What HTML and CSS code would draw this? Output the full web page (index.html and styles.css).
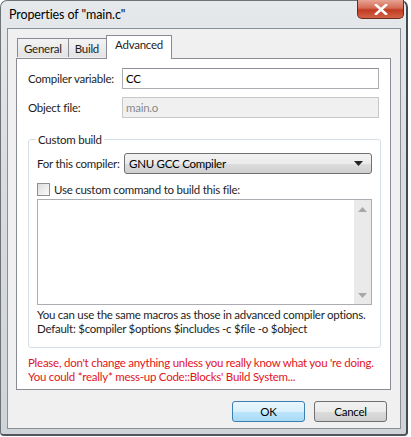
FILE: index.html
```html
<!DOCTYPE html>
<html>
<head>
<meta charset="utf-8">
<link rel="stylesheet" href="styles.css">
</head>
<body>
<div class="window">
  <div class="titlebar">
    <span class="title">Properties of "main.c"</span>
    <div class="close"><svg width="14" height="11" viewBox="0 0 14 11"><path d="M2 1 L12 10 M12 1 L2 10" stroke="#fff" stroke-width="2.6" stroke-linecap="square"/></svg></div>
  </div>
  <div class="client">
    <div class="tabs">
      <div class="tab">General</div>
      <div class="tab build">Build</div>
      <div class="tab active">Advanced</div>
    </div>
    <div class="panel">
      <div class="row">
        <span class="lbl">Compiler variable:</span>
        <div class="input">CC</div>
      </div>
      <div class="row row2">
        <span class="lbl">Object file:</span>
        <div class="input disabled">main.o</div>
      </div>
      <fieldset class="group">
        <legend>Custom build</legend>
        <div class="crow">
          <span class="clbl">For this compiler:</span>
          <div class="select"><span>GNU GCC Compiler</span><svg width="9" height="5" viewBox="0 0 9 5"><path d="M0 0 H9 L4.5 5 Z" fill="#222"/></svg></div>
        </div>
        <div class="check"><span class="box"></span><span>Use custom command to build this file:</span></div>
        <div class="textarea">
          <div class="vscroll">
            <svg width="9" height="5" viewBox="0 0 9 5"><path d="M0 5 H9 L4.5 0 Z" fill="#a8a8a8"/></svg>
            <svg width="9" height="5" viewBox="0 0 9 5"><path d="M0 0 H9 L4.5 5 Z" fill="#a8a8a8"/></svg>
          </div>
        </div>
        <p class="note">You can use the same macros as those in advanced compiler options.<br>Default: $compiler $options $includes -c $file -o $object</p>
      </fieldset>
      <p class="warn">Please, don't change anything unless you really know what you 're doing.<br>You could *really* mess-up Code::Blocks' Build System...</p>
    </div>
    <div class="buttons">
      <div class="btn ok">OK</div>
      <div class="btn">Cancel</div>
    </div>
  </div>
</div>
</body>
</html>
```
FILE: styles.css
```css
html, body {
  margin: 0;
  padding: 0;
  background: #fff;
}
body {
  font-family: Lato, "Noto Sans", sans-serif;
  font-size: 11.5px;
  letter-spacing: -0.25px;
  color: #1e1e1e;
  white-space: nowrap;
}
.window {
  width: 408px;
  height: 436px;
  box-sizing: border-box;
  border: 1px solid #6e7378;
  border-right: 2px solid #444a50;
  border-bottom: 2px solid #50565c;
  border-radius: 7px 7px 4px 4px;
  background: linear-gradient(to bottom, #e6e9ec 0%, #d9dde1 40%, #cfd4d9 100%);
  display: flex;
  flex-direction: column;
  padding: 0 5px 5px 6px;
}
.titlebar {
  height: 27px;
  display: flex;
  align-items: flex-start;
  position: relative;
}
.title {
  font-size: 12.5px;
  letter-spacing: -0.1px;
  color: #000;
  padding-left: 2px;
  padding-top: 6px;
}
.close {
  position: absolute;
  right: -3px;
  top: -1px;
  width: 47px;
  height: 19px;
  box-sizing: border-box;
  border: 1px solid #6b2a22;
  border-top: none;
  border-radius: 0 0 5px 5px;
  background: linear-gradient(to bottom, #e8a493 0%, #d46a55 45%, #c13a22 55%, #d26448 100%);
  display: flex;
  align-items: center;
  justify-content: center;
}
.client {
  flex: 1;
  border: 1px solid #8a9097;
  background: #f0f0f0;
  padding: 5px 13px 0 8px;
  display: flex;
  flex-direction: column;
}
.tabs {
  display: flex;
  align-items: flex-end;
  height: 24px;
  padding-left: 1px;
  position: relative;
  z-index: 1;
}
.tab {
  height: 19px;
  box-sizing: border-box;
  border: 1px solid #898c95;
  border-bottom: none;
  padding: 0 6px;
  line-height: 19px;
  background: linear-gradient(to bottom, #f3f3f3, #e3e3e3);
  margin-right: -1px;
  margin-bottom: 1px;
}
.tab.build {
  padding: 0 8px 0 6px;
}
.tab.active {
  height: 24px;
  line-height: 18px;
  background: #fff;
  padding: 0 8px;
  margin-bottom: -1px;
  margin-left: -1px;
}
.panel {
  width: 375px;
  height: 332px;
  box-sizing: border-box;
  border: 1px solid #898c95;
  background: #fff;
  padding: 9px 11px 0 11px;
}
.row {
  display: flex;
  align-items: center;
  height: 21px;
}
.row2 {
  margin-top: 8px;
}
.lbl {
  width: 94px;
  flex-shrink: 0;
}
.input {
  width: 259px;
  height: 21px;
  box-sizing: border-box;
  border: 1px solid #abadb3;
  border-top-color: #8d9096;
  padding: 0 3px;
  line-height: 19px;
  color: #000;
  background: #fff;
}
.input.disabled {
  background: #f0f0f0;
  color: #8a8a8a;
  border-color: #c8c8c8;
}
.group {
  margin: 15px 0 0 0;
  padding: 7px 8px 11px 8px;
  width: 353px;
  box-sizing: border-box;
  border: 1px solid #d5dfe5;
  border-radius: 3px;
}
.group legend {
  padding: 0 2px;
  margin-left: -1px;
}
.crow {
  display: flex;
  align-items: center;
  height: 21px;
}
.clbl {
  width: 87px;
  flex-shrink: 0;
}
.select {
  width: 248px;
  height: 21px;
  box-sizing: border-box;
  border: 1px solid #707070;
  border-radius: 3px;
  background: linear-gradient(to bottom, #f2f2f2 0%, #ebebeb 50%, #dddddd 51%, #cfcfcf 100%);
  display: flex;
  align-items: center;
  justify-content: space-between;
  padding: 0 8px 0 4px;
  color: #000;
}
.check {
  display: flex;
  align-items: center;
  margin-top: 8px;
  height: 14px;
}
.box {
  width: 13px;
  height: 13px;
  box-sizing: border-box;
  border: 1px solid #8f8f8f;
  background: linear-gradient(135deg, #dcdcdc, #fcfcfc);
  margin-right: 4px;
}
.textarea {
  margin-top: 3px;
  width: 335px;
  height: 106px;
  box-sizing: border-box;
  border: 1px solid #abadb3;
  background: #fff;
  display: flex;
  justify-content: flex-end;
}
.vscroll {
  width: 17px;
  background: #eaeaea;
  display: flex;
  flex-direction: column;
  justify-content: space-between;
  align-items: center;
  padding: 7px 0 6px 0;
}
.note {
  margin: 3px 0 0 0;
  line-height: 14px;
}
.warn {
  margin: 8px 0 0 0;
  line-height: 14px;
  color: #e2141c;
}
.buttons {
  display: flex;
  justify-content: flex-end;
  gap: 9px;
  margin-top: 11px;
}
.btn {
  width: 73px;
  height: 21px;
  box-sizing: border-box;
  border: 1px solid #707070;
  border-radius: 3px;
  background: linear-gradient(to bottom, #f2f2f2 0%, #ebebeb 50%, #dddddd 51%, #cfcfcf 100%);
  text-align: center;
  line-height: 19px;
  color: #000;
}
.btn.ok {
  border-color: #3c7fb1;
  background: linear-gradient(to bottom, #eaf6fd 0%, #d9f0fc 50%, #bee6fd 51%, #a7d9f5 100%);
}
```
